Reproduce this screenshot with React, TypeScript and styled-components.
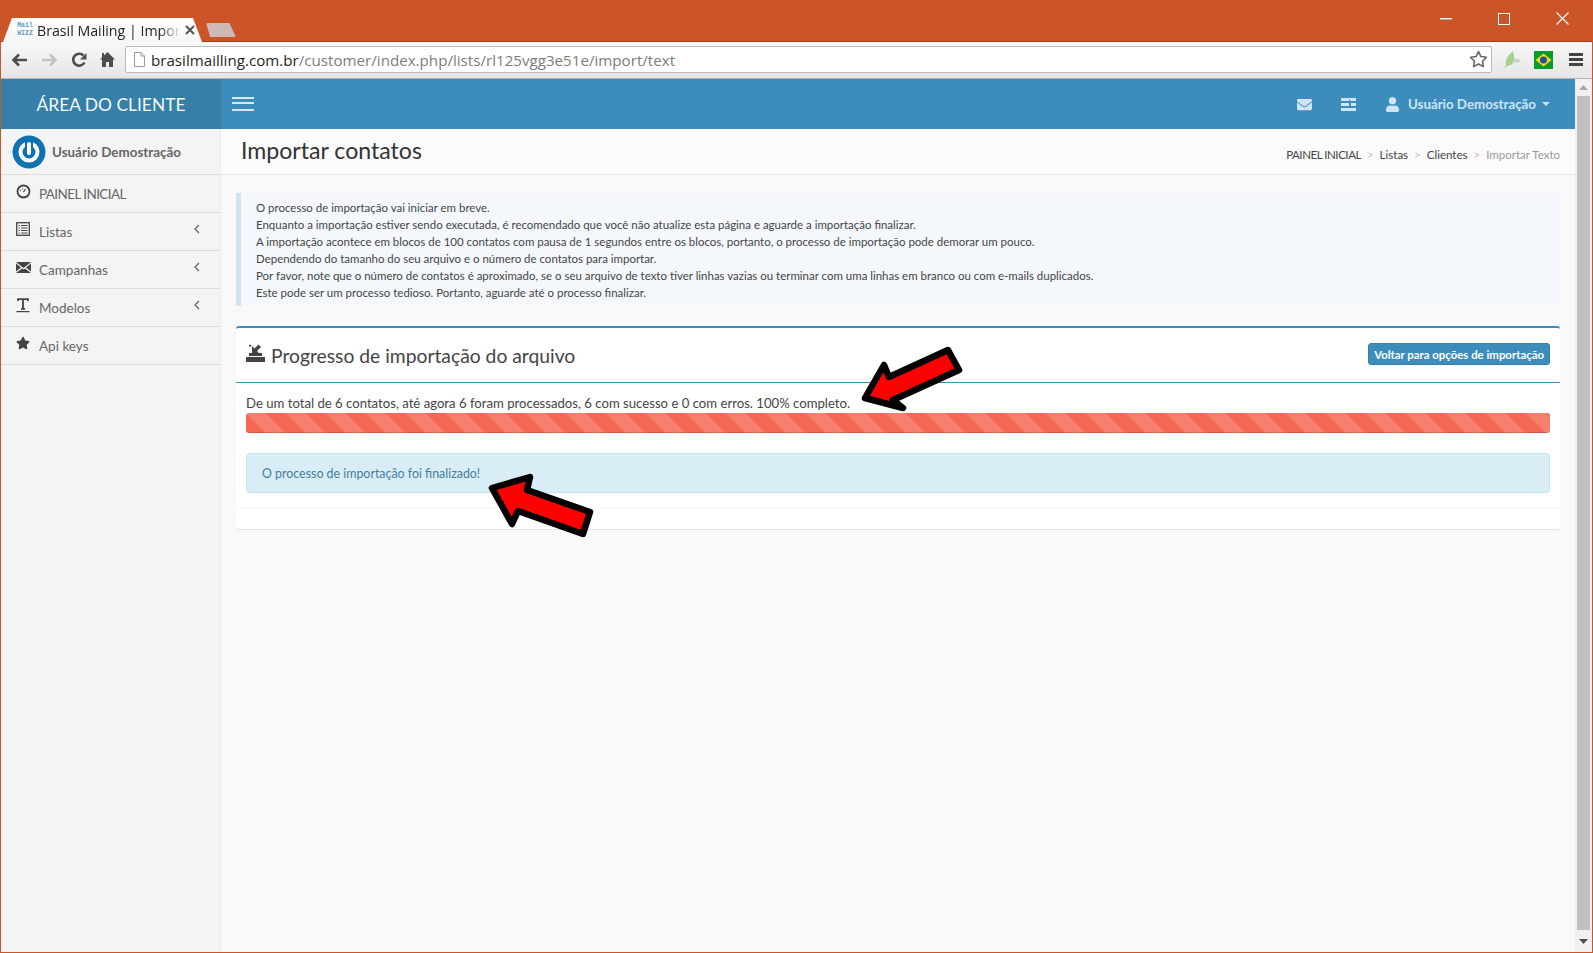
import { FaEnvelope, FaStar, FaUser } from "react-icons/fa";
import { FiStar } from "react-icons/fi";
import { createGlobalStyle, styled } from "styled-components";

const GlobalStyle = createGlobalStyle`
  html, body {
    margin: 0;
    padding: 0;
    height: 100%;
    overflow: hidden;
    background: #cc5429;
  }
  * {
    box-sizing: border-box;
  }
  #root {
    height: 100%;
  }
`;

const UI_FONT = `"Lato", "Liberation Sans", sans-serif`;
const CHROME_FONT = `"Open Sans", "Liberation Sans", sans-serif`;

const Window = styled.div`
  position: relative;
  width: 1593px;
  height: 953px;
  display: flex;
  flex-direction: column;
  padding: 0 1px 1px 1px;
  background: #cc5429;
  font-family: ${UI_FONT};
  overflow: hidden;
`;

const TitleBar = styled.div`
  height: 42px;
  flex: none;
  display: flex;
  align-items: flex-end;
  justify-content: space-between;
  padding-left: 5px;
  border-bottom: 1px solid #9d3f1e;
`;

const Tabs = styled.div`
  display: flex;
  align-items: flex-end;
  margin-bottom: -1px;
`;

const Tab = styled.div`
  position: relative;
  width: 181px;
  height: 24px;
  margin-left: 6px;
  display: flex;
  align-items: center;
  gap: 4px;
  padding-left: 5px;
  background: linear-gradient(#ffffff, #f6f6f6);
  font-family: ${CHROME_FONT};
  font-size: 14.2px;
  color: #222;
  &::before,
  &::after {
    content: "";
    position: absolute;
    top: 0;
    bottom: 0;
    width: 12px;
    background: linear-gradient(#ffffff, #f6f6f6);
  }
  &::before {
    left: -9px;
    clip-path: polygon(75% 0, 100% 0, 100% 100%, 0 100%);
  }
  &::after {
    right: -9px;
    clip-path: polygon(0 0, 25% 0, 100% 100%, 0 100%);
  }
`;

const Favicon = styled.div`
  width: 16px;
  flex: none;
  font-family: "Liberation Mono", monospace;
  font-size: 6.5px;
  line-height: 8px;
  font-weight: 700;
  color: #5b9cc7;
  text-align: center;
`;

const TabTitle = styled.div`
  flex: 1;
  white-space: nowrap;
  mask-image: linear-gradient(to right, #000 85%, transparent 100%);
`;

const TabClose = styled.div`
  position: relative;
  z-index: 1;
  flex: none;
  width: 10px;
  height: 10px;
  margin-right: 4px;
  svg {
    display: block;
  }
`;

const NewTab = styled.div`
  width: 30px;
  height: 14px;
  margin: 0 0 5px 13px;
  background: #cdb9b6;
  border-radius: 2px;
  clip-path: polygon(0 0, 78% 0, 100% 100%, 14% 100%);
`;

const WindowControls = styled.div`
  align-self: flex-start;
  display: flex;
  align-items: center;
  margin: 12px 23px 0 0;
  gap: 46px;
  svg {
    display: block;
  }
`;

const Toolbar = styled.div`
  height: 37px;
  flex: none;
  display: flex;
  align-items: center;
  padding: 0 0 1px 7px;
  background: linear-gradient(#f8f8f8, #e6e6e6);
  border-bottom: 1px solid #b5b5b5;
`;

const NavIcons = styled.div`
  display: flex;
  align-items: center;
  gap: 13px;
  width: 117px;
  padding-left: 3px;
  svg {
    display: block;
  }
`;

const Omnibox = styled.div`
  width: 1367px;
  height: 27px;
  display: flex;
  align-items: center;
  gap: 5px;
  padding: 0 3px 0 7px;
  background: #fff;
  border: 1px solid #b9b9b9;
  border-radius: 2px;
  font-family: ${CHROME_FONT};
  font-size: 15.15px;
  svg {
    display: block;
    flex: none;
  }
`;

const Url = styled.div`
  flex: 1;
  white-space: nowrap;
  color: #7d7d7d;
  b {
    font-weight: 400;
    color: #1f1f1f;
  }
`;

const Extensions = styled.div`
  display: flex;
  align-items: center;
  gap: 13px;
  margin-left: 11px;
  svg {
    display: block;
  }
`;

const ChromeMenu = styled.div`
  margin-left: 3px;
`;

const Browser = styled.div`
  flex: 1;
  min-height: 0;
  display: flex;
`;

const Page = styled.div`
  flex: 1;
  min-width: 0;
  display: flex;
  flex-direction: column;
  background: #f9f9f9;
`;

const Header = styled.header`
  height: 50px;
  flex: none;
  display: flex;
  align-items: center;
  background: #3c8dbc;
  color: #cfe5f3;
`;

const Brand = styled.div`
  width: 220px;
  height: 100%;
  display: flex;
  align-items: center;
  justify-content: center;
  background: #367fa9;
  color: #f3f8fb;
  font-size: 17.4px;
`;

const Burger = styled.div`
  width: 22px;
  height: 14px;
  margin-left: 11px;
  border-top: 2px solid #d8e8f2;
  border-bottom: 2px solid #d8e8f2;
  position: relative;
  &::after {
    content: "";
    position: absolute;
    left: 0;
    right: 0;
    top: 3px;
    height: 2px;
    background: #d8e8f2;
  }
`;

const HeaderRight = styled.div`
  margin-left: auto;
  display: flex;
  align-items: center;
  padding-right: 25px;
  font-size: 13.3px;
  font-weight: 700;
  svg {
    display: block;
  }
`;

const HeaderIcon = styled.div<{ $gap: number }>`
  margin-right: ${(props) => props.$gap}px;
`;

const Caret = styled.span`
  width: 0;
  height: 0;
  margin-left: 6px;
  border-left: 4px solid transparent;
  border-right: 4px solid transparent;
  border-top: 4px solid #cfe5f3;
`;

const Body = styled.div`
  flex: 1;
  min-height: 0;
  display: flex;
`;

const Sidebar = styled.aside`
  width: 220px;
  flex: none;
  background: #f4f4f4;
  border-right: 1px solid #ececec;
  color: #555;
`;

const UserPanel = styled.div`
  height: 46px;
  display: flex;
  align-items: center;
  padding-left: 11px;
  gap: 6px;
  border-bottom: 1px solid #dddddd;
  font-size: 13.4px;
  font-weight: 700;
  color: #666;
  svg {
    display: block;
  }
`;

const MenuItem = styled.div`
  height: 38px;
  display: flex;
  align-items: center;
  padding: 0 19px 0 15px;
  border-bottom: 1px solid #dddddd;
  font-size: 13.5px;
  color: #666;
`;

const MenuIcon = styled.div`
  width: 23px;
  flex: none;
  margin-top: -5px;
  color: #444;
  svg {
    display: block;
  }
`;

const MenuLabel = styled.div<{ $caps?: boolean }>`
  flex: 1;
  letter-spacing: ${(props) => (props.$caps ? "-0.6px" : "0")};
`;

const MenuChevron = styled.svg`
  display: block;
  margin-top: -5px;
`;

const Content = styled.main`
  flex: 1;
  min-width: 0;
`;

const ContentHeader = styled.div`
  height: 46px;
  display: flex;
  align-items: center;
  justify-content: space-between;
  padding: 0 15px 3px 20px;
  background: #fbfbfb;
  border-bottom: 1px solid #ececec;
`;

const PageTitle = styled.h1`
  margin: 0;
  font-size: 23.1px;
  font-weight: 400;
  color: #333;
`;

const Breadcrumb = styled.div`
  display: flex;
  align-items: center;
  margin-top: 8px;
  font-size: 11.5px;
  color: #444;
`;

const CrumbHome = styled.span`
  letter-spacing: -0.45px;
`;

const CrumbSep = styled.span`
  margin: 0 6px;
  color: #c4c4c4;
`;

const CrumbCurrent = styled.span`
  color: #999;
`;

const Inner = styled.div`
  padding: 18px 15px 0 15px;
`;

const Callout = styled.div`
  height: 113px;
  padding: 6px 15px;
  background: #f4f8fd;
  border-left: 5px solid #d2e3f2;
  font-size: 11.47px;
  line-height: 17px;
  color: #444;
`;

const Box = styled.section`
  margin-top: 20px;
  height: 203px;
  background: #fff;
  border-top: 2px solid #3c8dbc;
  border-radius: 3px;
  box-shadow: 0 1px 1px rgba(0, 0, 0, 0.1);
`;

const BoxHeader = styled.div`
  height: 55px;
  display: flex;
  align-items: center;
  justify-content: space-between;
  padding: 0 10px;
  border-bottom: 1px solid #3c8dbc;
`;

const BoxTitle = styled.h3`
  margin: 0;
  display: flex;
  align-items: center;
  gap: 6px;
  font-size: 19.3px;
  font-weight: 400;
  color: #444;
  svg {
    display: block;
    margin-top: -4px;
  }
`;

const BackButton = styled.div`
  height: 22px;
  margin-top: -2px;
  display: flex;
  align-items: center;
  padding: 0 5px;
  background: #3c8dbc;
  border: 1px solid #367fa9;
  border-radius: 3px;
  color: #fff;
  font-size: 11.4px;
  font-weight: 700;
`;

const BoxBody = styled.div`
  padding: 12px 10px 15px 10px;
  border-bottom: 1px solid #f4f4f4;
`;

const ProgressText = styled.div`
  height: 17px;
  font-size: 13.15px;
  line-height: 17px;
  color: #444;
`;

const ProgressBar = styled.div`
  height: 20px;
  margin-top: 1px;
  border-radius: 3px;
  box-shadow: inset 0 -1px 0 rgba(0, 0, 0, 0.15);
  background-color: #f56954;
  background-image: linear-gradient(
    45deg,
    rgba(255, 255, 255, 0.15) 25%,
    transparent 25%,
    transparent 50%,
    rgba(255, 255, 255, 0.15) 50%,
    rgba(255, 255, 255, 0.15) 75%,
    transparent 75%,
    transparent
  );
  background-size: 40px 40px;
`;

const Alert = styled.div`
  height: 40px;
  margin-top: 20px;
  display: flex;
  align-items: center;
  padding: 0 15px;
  background: #d9edf7;
  border: 1px solid #bce8f1;
  border-radius: 4px;
  color: #457d99;
  font-size: 12.4px;
`;

const Scrollbar = styled.div`
  width: 17px;
  flex: none;
  display: flex;
  flex-direction: column;
  background: #f1f1f1;
`;

const ScrollArrow = styled.div<{ $height: number }>`
  height: ${(props) => props.$height}px;
  flex: none;
  display: flex;
  align-items: center;
  justify-content: center;
`;

const ScrollThumb = styled.div`
  flex: 1;
  margin: 0 2px;
  background: #c0c0c0;
`;

const Arrow = styled.svg`
  position: absolute;
  left: 0;
  top: 0;
  pointer-events: none;
`;

const notes = [
  "O processo de importação vai iniciar em breve.",
  "Enquanto a importação estiver sendo executada, é recomendado que você não atualize esta página e aguarde a importação finalizar.",
  "A importação acontece em blocos de 100 contatos com pausa de 1 segundos entre os blocos, portanto, o processo de importação pode demorar um pouco.",
  "Dependendo do tamanho do seu arquivo e o número de contatos para importar.",
  "Por favor, note que o número de contatos é aproximado, se o seu arquivo de texto tiver linhas vazias ou terminar com uma linhas em branco ou com e-mails duplicados.",
  "Este pode ser um processo tedioso. Portanto, aguarde até o processo finalizar.",
];

const ListIcon = () => (
  <svg width="14" height="14" viewBox="0 0 14 14" fill="none" stroke="#444">
    <rect x="0.7" y="0.7" width="12.6" height="12.6" strokeWidth="1.3" />
    <path d="M5 3.500h6.500M5 6h6.500M5 8.500h6.500M5 11h6.500M2.500 3.500h1.200M2.500 6h1.200M2.500 8.500h1.200M2.500 11h1.200" strokeWidth="1" />
  </svg>
);

const MailCrossIcon = () => (
  <svg width="15" height="13" viewBox="0 0 15 13" fill="#444">
    <path d="M0 1h15L7.5 7zM0 2.5 5 6.5 0 10.5zM15 2.5 10 6.5l5 4zM0 12l6-4.6 1.5 1.1L9 7.4l6 4.6z" />
  </svg>
);

const TextIcon = () => (
  <svg width="14" height="15" viewBox="0 0 14 15" fill="none" stroke="#444">
    <path d="M2 3V1.2h10V3M7 1.2V10.5M5 10.8h4" strokeWidth="1.8" />
    <path d="M0.5 13.6h13" strokeWidth="1.2" />
  </svg>
);

const GaugeIcon = () => (
  <svg width="15" height="15" viewBox="0 0 15 15" fill="none" stroke="#444">
    <circle cx="7.5" cy="7.5" r="6" strokeWidth="1.8" />
    <path d="M4 6.5h1M6.5 4.5v1M9.5 5l-2 3" strokeWidth="1.2" />
  </svg>
);

const ImportIcon = () => (
  <svg width="19" height="18" viewBox="0 0 19 18" fill="#444">
    <path d="M0 13h19v5H0zM3 9h13v3H3z" />
    <path d="M15 3 11 7l2.5 2.5H6V2l2.5 2.5L12.5.5z" />
    <path d="M3 1 5 .5 5.5 2 3.5 3z" />
  </svg>
);

const TasksIcon = () => (
  <svg width="15" height="13" viewBox="0 0 15 13" fill="#cfe5f3">
    <path d="M0 0h15v3H9V1.5H8V3H0zM0 5h8v3H0zM10 5h5v3h-5zM0 10h15v3H0z" />
  </svg>
);

const PowerLogo = () => (
  <svg width="34" height="34" viewBox="0 0 34 34" fill="none">
    <circle cx="17" cy="17" r="16.5" fill="#0f73b3" />
    <circle cx="17" cy="17" r="8.5" stroke="#fff" strokeWidth="4" />
    <path d="M17 5v13" stroke="#0f73b3" strokeWidth="8" />
    <path d="M17 9v9" stroke="#fff" strokeWidth="4" strokeLinecap="round" />
  </svg>
);

const BrazilFlag = () => (
  <svg width="19" height="18" viewBox="0 0 19 18">
    <rect width="19" height="18" fill="#0c9a2c" />
    <path d="M9.5 2.5 17.5 9l-8 6.500L1.500 9z" fill="#f2d81e" />
    <circle cx="9.500" cy="9" r="3.500" fill="#2a4d9c" />
  </svg>
);

const LeafIcon = () => (
  <svg width="18" height="20" viewBox="0 0 18 20">
    <path d="M10 1C5 5 2 10 3 15l-2 4 3-3c5 0 8-4 7-10z" fill="#a8cf8f" />
    <path d="M11 9c3-1 5 0 7 2-2 2-4 2-7 1z" fill="#cfcfcf" />
  </svg>
);

function Chevron() {
  return (
    <MenuChevron width="8" height="10" viewBox="0 0 8 10" fill="none" stroke="#666" strokeWidth="1.3">
      <path d="M6 1 2 5l4 4" />
    </MenuChevron>
  );
}

function App() {
  return (
    <Window>
      <GlobalStyle />
      <TitleBar>
        <Tabs>
          <Tab>
            <Favicon>
              Mail
              <br />
              WIZZ
            </Favicon>
            <TabTitle>Brasil Mailing | Impor</TabTitle>
            <TabClose>
              <svg width="10" height="10" viewBox="0 0 10 10" stroke="#555" strokeWidth="2">
                <path d="M1 1l8 8M9 1l-8 8" />
              </svg>
            </TabClose>
          </Tab>
          <NewTab />
        </Tabs>
        <WindowControls>
          <svg width="12" height="2" viewBox="0 0 12 2">
            <rect width="12" height="1.4" fill="#fff" />
          </svg>
          <svg width="12" height="12" viewBox="0 0 12 12" fill="none" stroke="#fff" strokeWidth="1">
            <rect x="0.5" y="0.5" width="11" height="11" />
          </svg>
          <svg width="13" height="13" viewBox="0 0 13 13" stroke="#fff" strokeWidth="1.1">
            <path d="M0.500 0.500l12 12M12.500 0.500l-12 12" />
          </svg>
        </WindowControls>
      </TitleBar>
      <Toolbar>
        <NavIcons>
          <svg width="17" height="14" viewBox="0 0 17 14" fill="none" stroke="#4d4d4d" strokeWidth="2.6">
            <path d="M16 7H3M8 1.500 2.500 7 8 12.500" />
          </svg>
          <svg width="17" height="14" viewBox="0 0 17 14" fill="none" stroke="#c2c2c2" strokeWidth="2.6">
            <path d="M1 7h13M9 1.500 14.500 7 9 12.500" />
          </svg>
          <svg width="16" height="16" viewBox="0 0 16 16" fill="none" stroke="#4d4d4d" strokeWidth="2.6">
            <path d="M13.500 10.500A6 6 0 1 1 12.500 3.500" />
            <path d="M15.500 1v6.500H9z" fill="#4d4d4d" stroke="none" />
          </svg>
          <svg width="15" height="15" viewBox="0 0 15 15" fill="#4d4d4d">
            <path d="M7.500 0 15 7.500h-2V15H9V10H6v5H2V7.500H0L2 5.500V1h2v2.500z" />
          </svg>
        </NavIcons>
        <Omnibox>
          <svg width="13" height="15" viewBox="0 0 13 15" fill="#fff" stroke="#9a9a9a">
            <path d="M1.500.5h6.500l3.500 3.500v10.500h-10z" />
            <path d="M8 .5V4h3.500" fill="none" />
          </svg>
          <Url>
            <b>brasilmailling.com.br</b>/customer/index.php/lists/rl125vgg3e51e/import/text
          </Url>
          <FiStar size={19} color="#666" />
        </Omnibox>
        <Extensions>
          <LeafIcon />
          <BrazilFlag />
          <ChromeMenu>
            <svg width="14" height="13" viewBox="0 0 14 13" fill="#444">
              <rect width="14" height="3" y="0" />
              <rect width="14" height="3" y="5" />
              <rect width="14" height="3" y="10" />
            </svg>
          </ChromeMenu>
        </Extensions>
      </Toolbar>
      <Browser>
        <Page>
          <Header>
            <Brand>ÁREA DO CLIENTE</Brand>
            <Burger />
            <HeaderRight>
              <HeaderIcon $gap={29}>
                <FaEnvelope size={15} />
              </HeaderIcon>
              <HeaderIcon $gap={29}>
                <TasksIcon />
              </HeaderIcon>
              <HeaderIcon $gap={8}>
                <FaUser size={15} />
              </HeaderIcon>
              Usuário Demostração
              <Caret />
            </HeaderRight>
          </Header>
          <Body>
            <Sidebar>
              <UserPanel>
                <PowerLogo />
                Usuário Demostração
              </UserPanel>
              <MenuItem>
                <MenuIcon>
                  <GaugeIcon />
                </MenuIcon>
                <MenuLabel $caps>PAINEL INICIAL</MenuLabel>
              </MenuItem>
              <MenuItem>
                <MenuIcon>
                  <ListIcon />
                </MenuIcon>
                <MenuLabel>Listas</MenuLabel>
                <Chevron />
              </MenuItem>
              <MenuItem>
                <MenuIcon>
                  <MailCrossIcon />
                </MenuIcon>
                <MenuLabel>Campanhas</MenuLabel>
                <Chevron />
              </MenuItem>
              <MenuItem>
                <MenuIcon>
                  <TextIcon />
                </MenuIcon>
                <MenuLabel>Modelos</MenuLabel>
                <Chevron />
              </MenuItem>
              <MenuItem>
                <MenuIcon>
                  <FaStar size={14} />
                </MenuIcon>
                <MenuLabel>Api keys</MenuLabel>
              </MenuItem>
            </Sidebar>
            <Content>
              <ContentHeader>
                <PageTitle>Importar contatos</PageTitle>
                <Breadcrumb>
                  <CrumbHome>PAINEL INICIAL</CrumbHome>
                  <CrumbSep>&gt;</CrumbSep>
                  Listas
                  <CrumbSep>&gt;</CrumbSep>
                  Clientes
                  <CrumbSep>&gt;</CrumbSep>
                  <CrumbCurrent>Importar Texto</CrumbCurrent>
                </Breadcrumb>
              </ContentHeader>
              <Inner>
                <Callout>
                  {notes.map((line) => (
                    <div key={line}>{line}</div>
                  ))}
                </Callout>
                <Box>
                  <BoxHeader>
                    <BoxTitle>
                      <ImportIcon />
                      Progresso de importação do arquivo
                    </BoxTitle>
                    <BackButton>Voltar para opções de importação</BackButton>
                  </BoxHeader>
                  <BoxBody>
                    <ProgressText>
                      De um total de 6 contatos, até agora 6 foram processados, 6 com sucesso e 0 com erros. 100% completo.
                    </ProgressText>
                    <ProgressBar />
                    <Alert>O processo de importação foi finalizado!</Alert>
                  </BoxBody>
                </Box>
              </Inner>
            </Content>
          </Body>
        </Page>
        <Scrollbar>
          <ScrollArrow $height={17}>
            <svg width="9" height="5" viewBox="0 0 9 5" fill="#a8a8a8">
              <path d="M4.500 0 9 5H0z" />
            </svg>
          </ScrollArrow>
          <ScrollThumb />
          <ScrollArrow $height={22}>
            <svg width="9" height="5" viewBox="0 0 9 5" fill="#505050">
              <path d="M0 0h9L4.500 5z" />
            </svg>
          </ScrollArrow>
        </Scrollbar>
      </Browser>
      <Arrow width="1593" height="953" viewBox="0 0 1593 953">
        <g fill="#ff0000" stroke="#000" strokeWidth="6.5" strokeLinejoin="round">
          <path d="M865 398 884 365 889 377 948 350 959 370 893 400 903 408z" />
          <path d="M492 488 530 477 527 490 590 512 583 534 518 511 512 524z" />
        </g>
      </Arrow>
    </Window>
  );
}

export default App;
